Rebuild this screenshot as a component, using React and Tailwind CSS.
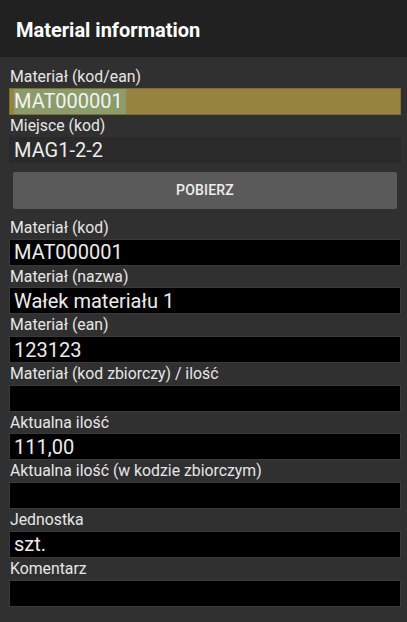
export default function App() {
  const fields = [
    { label: "Materiał (kod)", value: "MAT000001" },
    { label: "Materiał (nazwa)", value: "Wałek materiału 1" },
    { label: "Materiał (ean)", value: "123123" },
    { label: "Materiał (kod zbiorczy) / ilość", value: "" },
    { label: "Aktualna ilość", value: "111,00" },
    { label: "Aktualna ilość (w kodzie zbiorczym)", value: "" },
    { label: "Jednostka", value: "szt." },
    { label: "Komentarz", value: "" },
  ];

  return (
    <div
      className="w-[407px] h-[622px] bg-[#303030] overflow-hidden flex flex-col"
      style={{ fontFamily: "Roboto, 'Noto Sans', sans-serif" }}
    >
      <div className="h-[57px] shrink-0 bg-[#212121] flex items-center px-4">
        <h1 className="text-[20px] font-bold text-white pt-[3px]">Material information</h1>
      </div>

      <div className="pt-[9px] pl-[9px] pr-[6px] flex flex-col">
        <div className="h-[22px] leading-[22px] text-[15.8px] text-[#e6e6e6] pl-px">Materiał (kod/ean)</div>
        <div className="h-[27px] bg-[#968440] border border-[#7e6e34] flex items-center pl-[4px]">
          <span className="bg-[#8b9b6a] text-[20px] leading-[25px] text-[#f2f2f2] pr-[3px]">MAT000001</span>
        </div>

        <div className="h-[22px] leading-[22px] text-[15.8px] text-[#e6e6e6] pl-px">Miejsce (kod)</div>
        <div className="h-[26px] bg-[#2a2a2a] flex items-center pl-[5px] text-[20px] text-[#ececec]">MAG1-2-2</div>

        <button className="mt-[9px] mx-[4px] h-[37px] bg-[#5a5a5a] rounded-[2px] text-[14px] font-medium text-[#eeeeee] tracking-[0.2px]">
          POBIERZ
        </button>

        <div className="h-[8px]" />

        {fields.map((f) => (
          <div key={f.label} className="flex flex-col">
            <div className="h-[21.7px] leading-[22px] text-[15.8px] text-[#e6e6e6] pl-px">{f.label}</div>
            <div className="h-[27px] bg-black border border-[#3a3a3a] flex items-center pl-[4px] text-[20px] text-[#ececec]">
              {f.value}
            </div>
          </div>
        ))}
      </div>
    </div>
  );
}
